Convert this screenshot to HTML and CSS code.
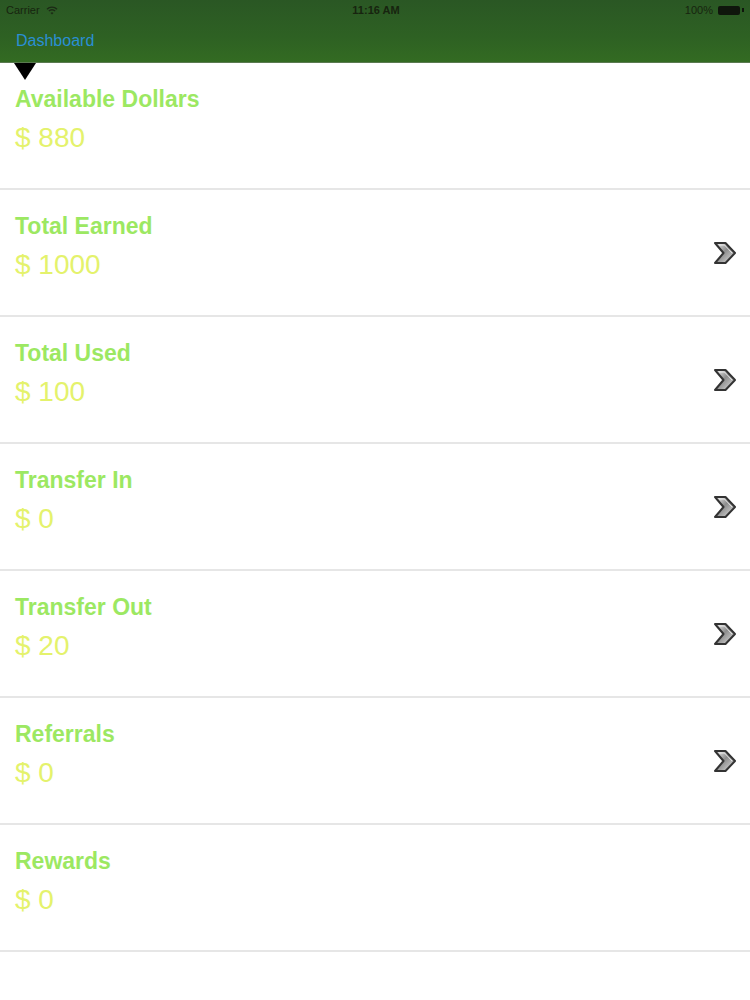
FILE: index.html
```html
<!DOCTYPE html>
<html>
<head>
<meta charset="utf-8">
<link rel="stylesheet" href="styles.css">
</head>
<body>
<header class="topbar">
  <div class="status">
    <div class="status-left">Carrier
      <svg class="wifi" width="12" height="9" viewBox="0 0 12 9"><path d="M1 3.2 A7 7 0 0 1 11 3.2" fill="none" stroke="#1c2a16" stroke-width="1.4"/><path d="M2.9 5.1 A4.3 4.3 0 0 1 9.1 5.1" fill="none" stroke="#1c2a16" stroke-width="1.4"/><path d="M6 8.6 L4.5 6.9 A2.1 2.1 0 0 1 7.5 6.9 Z" fill="#1c2a16"/></svg>
    </div>
    <div class="status-time">11:16 AM</div>
    <div class="status-right">100%<span class="battery"></span><span class="battery-tip"></span></div>
  </div>
  <div class="navbar"><span class="nav-title">Dashboard</span></div>
</header>
<div class="pointer"></div>
<svg class="defs" width="0" height="0"><defs><linearGradient id="g1" x1="0" y1="0" x2="1" y2="1"><stop offset="0" stop-color="#f4f4f4"/><stop offset="0.45" stop-color="#8c8c8c"/><stop offset="1" stop-color="#e6e6e6"/></linearGradient></defs></svg>
<main class="list">
  <div class="row"><div class="info"><div class="label">Available Dollars</div><div class="value">$ 880</div></div></div>
  <div class="row"><div class="info"><div class="label">Total Earned</div><div class="value">$ 1000</div></div>
    <svg class="chev" width="24" height="24" viewBox="0 0 24 24"><path d="M2 2 L12.5 2 L22 12 L12.5 22 L2 22 L10.5 12 Z" fill="url(#g1)" stroke="#333" stroke-width="2" stroke-linejoin="round"/><path d="M6 4 L11.5 4 L19 12" fill="none" stroke="#fff" stroke-width="1" opacity="0.7"/></svg></div>
  <div class="row"><div class="info"><div class="label">Total Used</div><div class="value">$ 100</div></div>
    <svg class="chev" width="24" height="24" viewBox="0 0 24 24"><path d="M2 2 L12.5 2 L22 12 L12.5 22 L2 22 L10.5 12 Z" fill="url(#g1)" stroke="#333" stroke-width="2" stroke-linejoin="round"/><path d="M6 4 L11.5 4 L19 12" fill="none" stroke="#fff" stroke-width="1" opacity="0.7"/></svg></div>
  <div class="row"><div class="info"><div class="label">Transfer In</div><div class="value">$ 0</div></div>
    <svg class="chev" width="24" height="24" viewBox="0 0 24 24"><path d="M2 2 L12.5 2 L22 12 L12.5 22 L2 22 L10.5 12 Z" fill="url(#g1)" stroke="#333" stroke-width="2" stroke-linejoin="round"/><path d="M6 4 L11.5 4 L19 12" fill="none" stroke="#fff" stroke-width="1" opacity="0.7"/></svg></div>
  <div class="row"><div class="info"><div class="label">Transfer Out</div><div class="value">$ 20</div></div>
    <svg class="chev" width="24" height="24" viewBox="0 0 24 24"><path d="M2 2 L12.5 2 L22 12 L12.5 22 L2 22 L10.5 12 Z" fill="url(#g1)" stroke="#333" stroke-width="2" stroke-linejoin="round"/><path d="M6 4 L11.5 4 L19 12" fill="none" stroke="#fff" stroke-width="1" opacity="0.7"/></svg></div>
  <div class="row"><div class="info"><div class="label">Referrals</div><div class="value">$ 0</div></div>
    <svg class="chev" width="24" height="24" viewBox="0 0 24 24"><path d="M2 2 L12.5 2 L22 12 L12.5 22 L2 22 L10.5 12 Z" fill="url(#g1)" stroke="#333" stroke-width="2" stroke-linejoin="round"/><path d="M6 4 L11.5 4 L19 12" fill="none" stroke="#fff" stroke-width="1" opacity="0.7"/></svg></div>
  <div class="row"><div class="info"><div class="label">Rewards</div><div class="value">$ 0</div></div></div>
</main>
</body>
</html>
```
FILE: styles.css
```css
* { box-sizing: border-box; }
html, body { margin: 0; padding: 0; background: #ffffff; }
body { width: 750px; height: 1000px; overflow: hidden; font-family: "Liberation Sans", Arial, sans-serif; position: relative; }

.defs { position: absolute; width: 0; height: 0; }

.topbar {
  height: 63px;
  background: linear-gradient(to bottom, #2a5724 0%, #2e6123 60%, #336b22 100%);
  border-bottom: 1px solid #5a7a50;
}
.status {
  height: 20px;
  display: flex;
  align-items: center;
  justify-content: space-between;
  padding: 0 6px;
  font-size: 11px;
  color: #17240f;
}
.status-left { display: flex; align-items: center; gap: 6px; flex: 1; }
.status-time { font-weight: bold; flex: 1; text-align: center; padding-left: 2px; }
.status-right { flex: 1; display: flex; justify-content: flex-end; align-items: center; gap: 2px; }
.battery { width: 22px; height: 9px; background: #0f160c; border-radius: 2px; display: inline-block; margin-left: 3px; }
.battery-tip { width: 2px; height: 4px; background: #0f160c; display: inline-block; }
.wifi { display: block; }

.navbar { height: 42px; display: flex; align-items: center; padding-left: 16px; padding-bottom: 0; }
.nav-title { color: #2a8fd4; font-size: 16px; }

.pointer {
  position: absolute;
  left: 14px;
  top: 63px;
  width: 0; height: 0;
  border-left: 11px solid transparent;
  border-right: 11px solid transparent;
  border-top: 17px solid #000;
}

.list { display: flex; flex-direction: column; }
.row {
  height: 127px;
  border-bottom: 2px solid #e6e6e6;
  display: flex;
  align-items: center;
  justify-content: space-between;
  padding: 0 13px 0 15px;
}
.info { display: flex; flex-direction: column; padding-bottom: 12px; }
.label { font-size: 23px; font-weight: bold; line-height: 26px; color: #9ce862; }
.value { font-size: 28px; line-height: 32px; color: #e4f26c; margin-top: 10px; }
.chev { display: block; }
```
